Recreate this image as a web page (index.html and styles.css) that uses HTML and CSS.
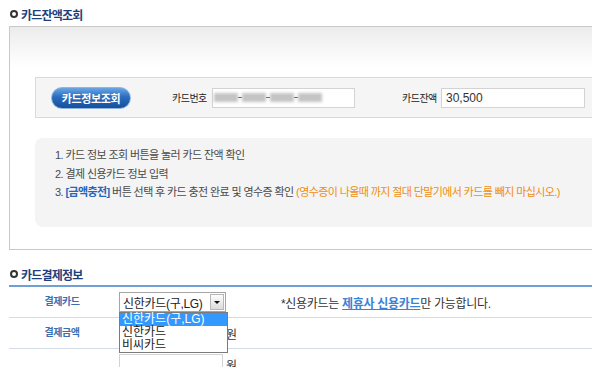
FILE: index.html
```html
<!DOCTYPE html>
<html lang="ko">
<head>
    <meta charset="UTF-8">
    <title>카드잔액조회</title>
    <link rel="stylesheet" href="styles.css">
</head>
<body>

<div class="page">
    <h3 class="title"><span class="dot"></span>카드잔액조회</h3>

    <div class="box">
        <div class="bar">
            <button class="lookup-btn">카드정보조회</button>
            <span class="label first">카드번호</span>
            <div class="field card-no">
                <span class="blur"></span><span class="dash"></span>
                <span class="blur"></span><span class="dash"></span>
                <span class="blur"></span><span class="dash"></span>
                <span class="blur"></span>
            </div>
            <span class="label second">카드잔액</span>
            <div class="field balance">30,500</div>
        </div>

        <div class="guide">
            <p>1. 카드 정보 조회 버튼을 눌러 카드 잔액 확인</p>
            <p>2. 결제 신용카드 정보 입력</p>
            <p>3. <b class="blue">[금액충전]</b> 버튼 선택 후 카드 충전 완료 및 영수증 확인 <span class="orange">(영수증이 나올때 까지 절대 단말기에서 카드를 빼지 마십시오.)</span></p>
        </div>
    </div>

    <h3 class="title second-title"><span class="dot"></span>카드결제정보</h3>

    <div class="pay">
        <div class="row">
            <div class="th">결제카드</div>
            <div class="td">
                <div class="select">
                    <span class="select-text">신한카드(구,LG)</span>
                    <span class="arrow"></span>
                    <ul class="options">
                        <li class="on">신한카드(구,LG)</li>
                        <li>신한카드</li>
                        <li>비씨카드</li>
                    </ul>
                </div>
                <span class="note">*신용카드는 <a href="#">제휴사 신용카드</a>만 가능합니다.</span>
            </div>
        </div>
        <div class="row">
            <div class="th">결제금액</div>
            <div class="td">
                <div class="input"></div>
                <span class="won">원</span>
            </div>
        </div>
        <div class="row last">
            <div class="th"></div>
            <div class="td">
                <div class="input"></div>
                <span class="won">원</span>
            </div>
        </div>
    </div>
</div>

</body>
</html>
```

FILE: styles.css
```css
body {
    margin: 0;
    font-family: "Liberation Sans", "Noto Sans CJK KR", sans-serif;
    font-size: 11px;
    color: #444;
    background: #fff;
    overflow: hidden;
}
.page {
    width: 640px;
}
.title {
    display: flex;
    align-items: center;
    margin: 6px 0 0 0;
    padding-left: 10px;
    height: 16px;
    font-size: 12px;
    font-weight: bold;
    letter-spacing: -0.8px;
    color: #1d3f7c;
}
.dot {
    width: 4px;
    height: 4px;
    border: 2px solid #333;
    border-radius: 50%;
    margin-right: 3px;
}
.box {
    margin: 4px 0 0 9px;
    height: 224px;
    border: 1px solid #c9c9c9;
    border-right: none;
    background: linear-gradient(#ececec, #fff 40px);
    padding-top: 50px;
    box-sizing: border-box;
}
.bar {
    display: flex;
    align-items: center;
    margin-left: 25px;
    height: 41px;
    box-sizing: border-box;
    border: 1px solid #dadada;
    border-right: none;
    background: #f5f5f5;
    padding-left: 15px;
}
.lookup-btn {
    width: 80px;
    height: 22px;
    border: 1px solid #8fb6e4;
    border-radius: 11px;
    background: linear-gradient(#6aa6e6, #2a6cbd 45%, #174f9c);
    color: #fff;
    font-family: inherit;
    font-size: 11px;
    font-weight: bold;
    letter-spacing: -0.4px;
    padding: 0;
}
.label {
    color: #222;
    font-size: 10px;
    letter-spacing: -0.5px;
}
.label.first {
    margin-left: 41px;
    width: 40px;
}
.label.second {
    margin-left: 47px;
    width: 39px;
}
.field {
    height: 20px;
    box-sizing: border-box;
    border: 1px solid #d3d3d3;
    background: #fff;
    display: flex;
    align-items: center;
}
.card-no {
    width: 143px;
    padding-left: 1px;
}
.blur {
    width: 24px;
    height: 9px;
    background: #c4c4c4;
    filter: blur(1.5px);
}
.dash {
    width: 4px;
    height: 1px;
    background: #555;
}
.balance {
    width: 144px;
    padding-left: 4px;
    font-size: 12px;
    color: #333;
}
.guide {
    margin: 20px 0 0 25px;
    height: 89px;
    box-sizing: border-box;
    padding: 8px 0 0 20px;
    background: #f4f4f4;
    border-radius: 8px 0 0 8px;
}
.guide p {
    margin: 0;
    line-height: 18.5px;
    font-size: 11px;
    letter-spacing: -0.6px;
    color: #4a4a4a;
}
.blue {
    color: #2766b8;
}
.orange {
    color: #f08c10;
}
.second-title {
    margin-top: 16px;
}
.pay {
    margin: 3px 0 0 9px;
    border-top: 2px solid #6f9fd3;
}
.row {
    display: flex;
    height: 30px;
    border-bottom: 1px solid #d3dbe6;
}
.row.last {
    border-bottom: none;
}
.th {
    width: 106px;
    text-align: center;
    line-height: 30px;
    font-size: 10px;
    font-weight: bold;
    letter-spacing: -0.5px;
    color: #3c6eb0;
}
.td {
    display: flex;
    align-items: center;
    padding-left: 4px;
}
.select {
    position: relative;
    width: 107px;
    height: 20px;
    box-sizing: border-box;
    border: 1px solid #a5a5a5;
    background: #fff;
    display: flex;
    align-items: center;
}
.select-text {
    flex: 1;
    padding-left: 3px;
    font-size: 12px;
    color: #222;
    letter-spacing: -0.3px;
}
.arrow {
    position: relative;
    width: 14px;
    height: 16px;
    margin-right: 1px;
    border: 1px solid #b7b7b7;
    box-sizing: border-box;
    background: linear-gradient(#fdfdfd, #dcdcdc);
}
.arrow::after {
    content: "";
    position: absolute;
    left: 3px;
    top: 6px;
    border-left: 3px solid transparent;
    border-right: 3px solid transparent;
    border-top: 3px solid #111;
}
.options {
    position: absolute;
    left: -1px;
    top: 19px;
    width: 107px;
    margin: 0;
    padding: 0;
    list-style: none;
    border: 1px solid #7b7b7b;
    background: #fff;
    z-index: 2;
}
.options li {
    height: 13px;
    line-height: 13px;
    padding-left: 2px;
    font-size: 12px;
    color: #222;
}
.options li.on {
    background: #3399ff;
    color: #fff;
}
.note {
    margin-left: 55px;
    font-size: 12px;
    letter-spacing: -0.3px;
    color: #333;
}
.note a {
    color: #3a82d6;
    font-weight: bold;
}
.input {
    width: 104px;
    height: 20px;
    box-sizing: border-box;
    border: 1px solid #d3d3d3;
    background: #fff;
}
.won {
    margin-left: 3px;
    font-size: 12px;
    color: #333;
}
```
